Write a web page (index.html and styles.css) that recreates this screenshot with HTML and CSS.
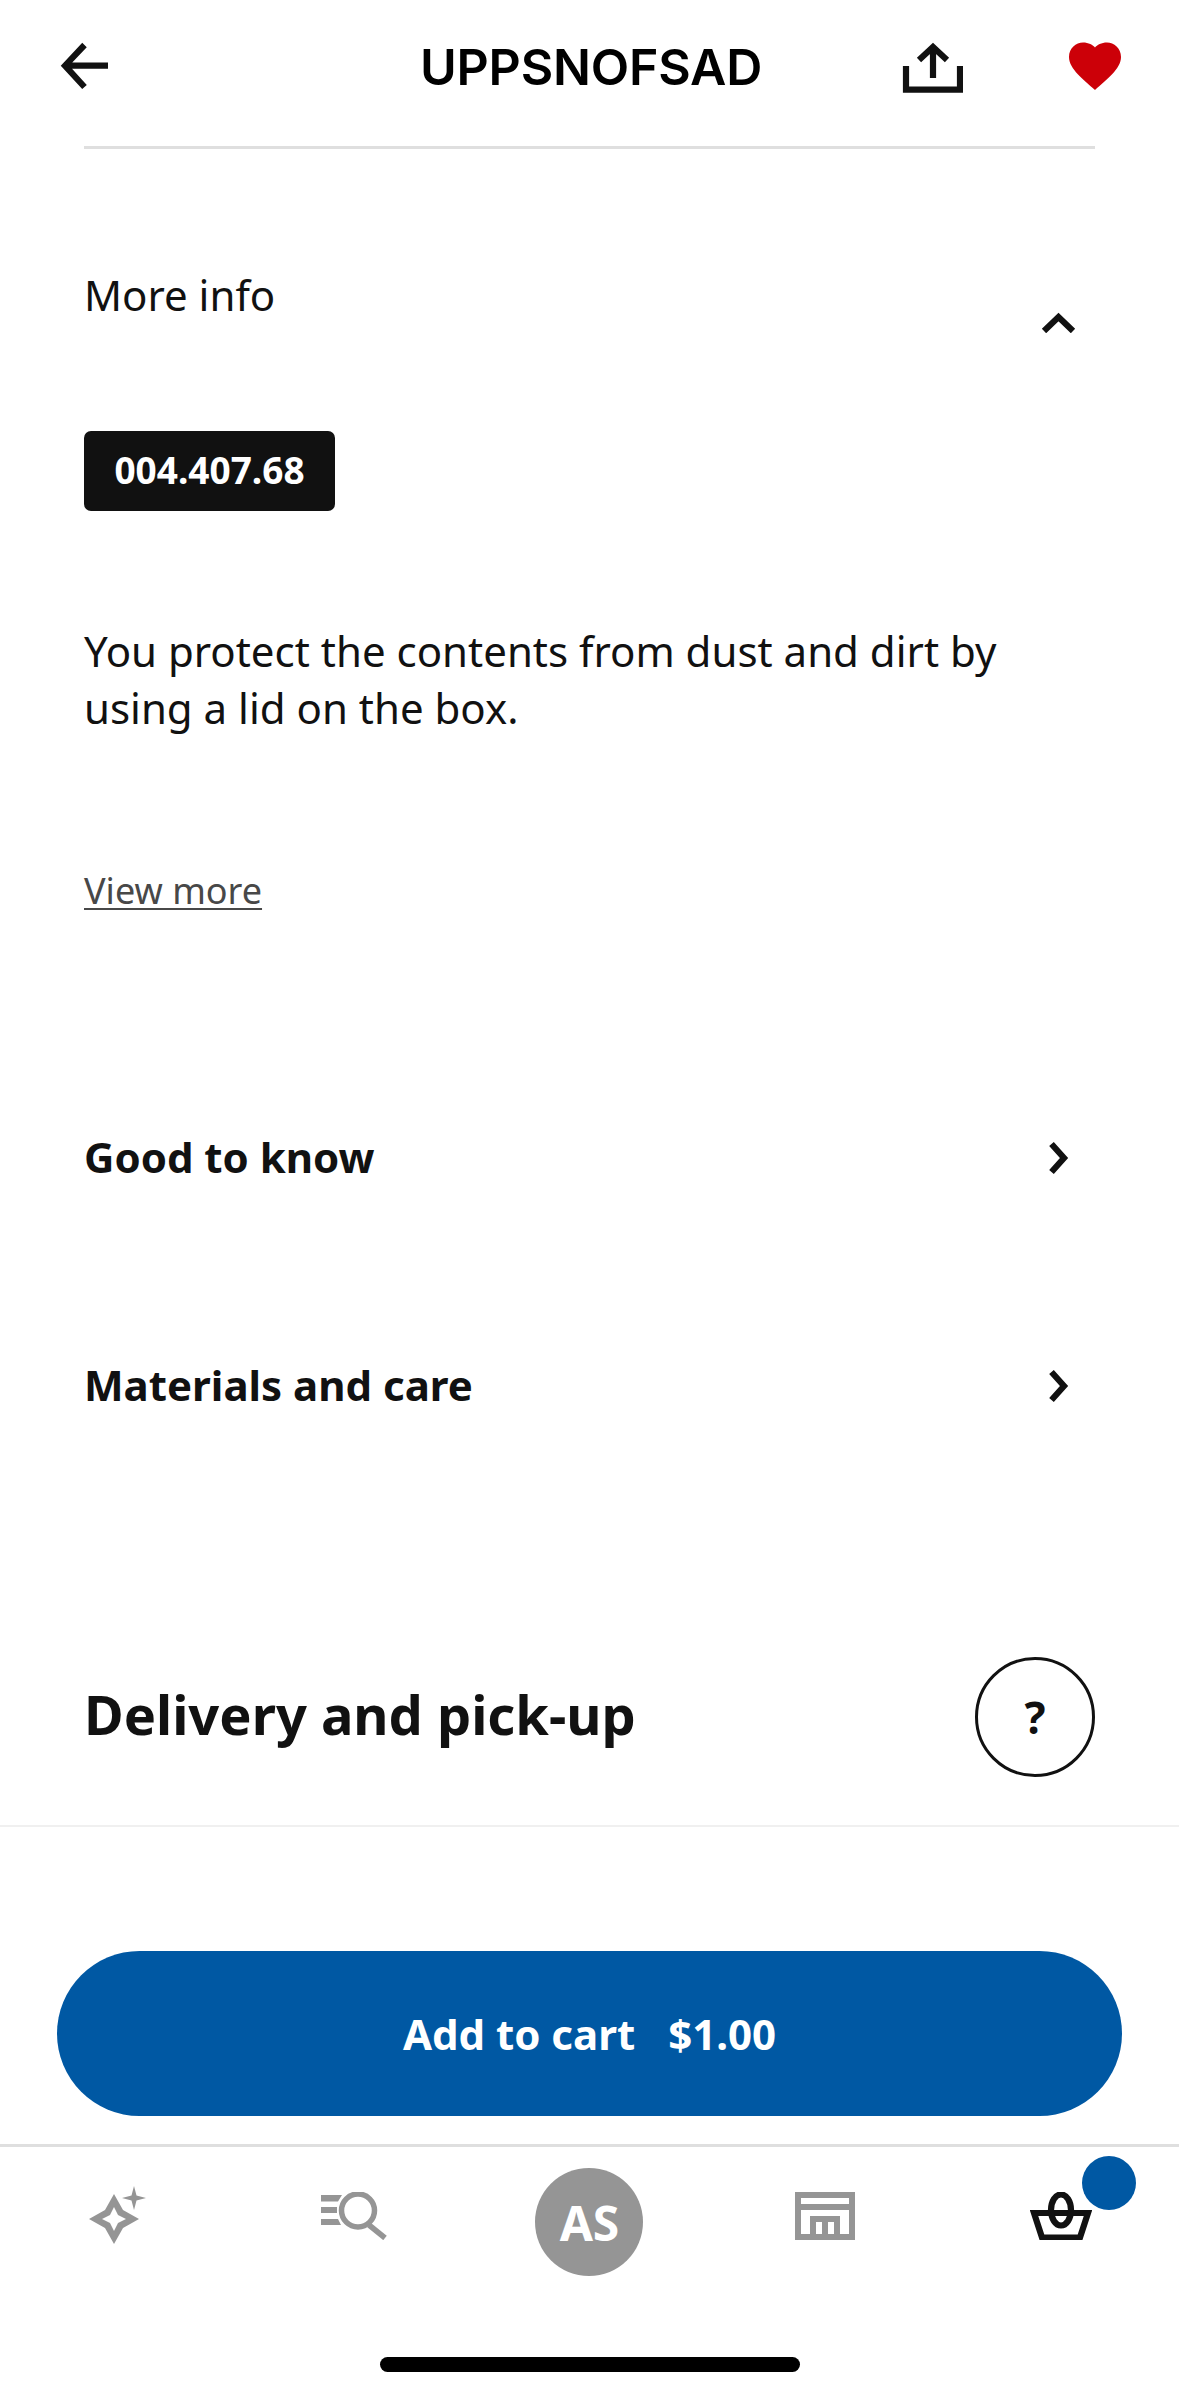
FILE: index.html
```html
<!DOCTYPE html>
<html lang="en">
<head>
<meta charset="utf-8">
<title>UPPSNOFSAD</title>
<link rel="stylesheet" href="styles.css">
</head>
<body>
<div class="page">
  <header class="topbar">
    <svg class="ico-back" viewBox="0 0 49 48"><path d="M24.500 3 L5 23.700 L24.500 45 M5 23.700 H48" class="line"/></svg>
    <h1 class="title">UPPSNOFSAD</h1>
    <div class="actions">
      <svg class="ico-share" viewBox="0 0 61 51"><path d="M4 24 V47.700 H58 V24 M31 36 V5 M17 18 L31 5 L45 18" class="line"/></svg>
      <svg class="ico-heart" viewBox="0 0 54 48"><path d="M27 48 C16 38 1 27 1 15 C1 6 8 0.500 15 0.500 C20.500 0.500 25 3 27 5.500 C29 3 33.500 0.500 39 0.500 C46 0.500 53 6 53 15 C53 27 38 38 27 48 Z" fill="#cc0008"/></svg>
    </div>
  </header>
  <div class="rule"></div>

  <section class="content">
    <div class="info-head">
      <span class="info-label">More info</span>
      <svg class="ico-up" viewBox="0 0 35 21"><path d="M3 19 L17.500 5 L32 19" class="line"/></svg>
    </div>
    <div class="article">004.407.68</div>
    <p class="desc">You protect the contents from dust and dirt by<br>using a lid on the box.</p>
    <a class="more">View more</a>

    <div class="rows">
      <div class="row">
        <span class="row-label">Good to know</span>
        <svg class="ico-right" viewBox="0 0 21 34"><path d="M3.500 3 L16 17 L3.500 31" class="line"/></svg>
      </div>
      <div class="row">
        <span class="row-label">Materials and care</span>
        <svg class="ico-right" viewBox="0 0 21 34"><path d="M3.500 3 L16 17 L3.500 31" class="line"/></svg>
      </div>
    </div>

    <div class="delivery">
      <h2 class="delivery-title">Delivery and pick-up</h2>
      <div class="help">?</div>
    </div>
  </section>
  <div class="hairline"></div>

  <div class="cta-wrap">
    <button class="cta"><span>Add to cart</span><span>$1.00</span></button>
  </div>

  <nav class="nav">
    <div class="nav-item">
      <svg class="ico-spark" viewBox="0 0 57 58"><path fill-rule="evenodd" class="gray" d="M25 8 L34 24 L50 33 L34 42 L25 58 L16 42 L0 33 L16 24 Z M25 21 L21 29 L13 33 L21 37 L25 45 L29 37 L37 33 L29 29 Z M45 0 L47.500 9.500 L57 12 L47.500 14.500 L45 24 L42.500 14.500 L33 12 L42.500 9.500 Z"/></svg>
    </div>
    <div class="nav-item">
      <svg class="ico-search" viewBox="0 0 66 48"><path class="gray" d="M0 3 H21 L17 9.500 H0 Z M0 15 H16 V21 H0 Z M0 27 H17 L20 33 H0 Z"/><circle cx="37" cy="18.500" r="16.500" class="gline"/><path d="M48 33 L64 46" class="gline"/></svg>
    </div>
    <div class="nav-item">
      <div class="avatar">AS</div>
    </div>
    <div class="nav-item">
      <svg class="ico-store" viewBox="0 0 60 48"><path fill-rule="evenodd" class="gray" d="M0 0 H60 V48 H0 Z M6 6 V12 H54 V6 Z M6 18 V42 H15 V24 H45 V42 H54 V18 Z M21 30 V42 H27 V30 Z M33 30 V42 H39 V30 Z"/></svg>
    </div>
    <div class="nav-item nav-cart">
      <svg class="ico-basket" viewBox="0 0 62 48"><path d="M4 21 H58 L50 45.500 H12 Z" class="line"/><ellipse cx="31" cy="18" rx="10" ry="15.500" class="line"/></svg>
      <span class="cart-dot"></span>
    </div>
  </nav>
  <div class="home-bar"></div>
</div>
</body>
</html>
```

FILE: styles.css
```css
* { box-sizing: border-box; }
html, body { margin: 0; padding: 0; background: #fff; }
.page {
  width: 1179px;
  height: 2396px;
  overflow: hidden;
  font-family: "Noto Sans", sans-serif;
  color: #111;
  background: #fff;
}
svg { display: block; flex: none; }
.line { fill: none; stroke: #111; stroke-width: 6.2; }
.gray { fill: #959595; }
.gline { fill: none; stroke: #959595; stroke-width: 5.5; }

.topbar {
  height: 146px;
  padding: 42px 57px 0 60px;
  display: grid;
  grid-template-columns: 1fr auto 1fr;
  align-items: start;
}
.title {
  margin: 0;
  font-family: Inter, "Liberation Sans", sans-serif;
  font-size: 50px;
  line-height: 50px;
  font-weight: 600;
  letter-spacing: -0.2px;
  color: #000;
}
.ico-back { width: 49px; height: 48px; }
.actions { display: flex; justify-content: flex-end; gap: 105px; }
.ico-share { width: 61px; height: 51px; }
.ico-heart { width: 54px; height: 48px; }
.rule { height: 3px; margin: 0 84px; background: #dfdfdf; }

.content { padding: 0 84px; }
.info-head {
  margin-top: 117px;
  height: 67px;
  display: flex;
  justify-content: space-between;
  align-items: flex-start;
}
.info-label { font-size: 42px; line-height: 57px; color: #111; }
.ico-up { width: 35px; height: 21px; margin: 46px 19px 0 0; }

.article {
  margin-top: 98px;
  width: 251px;
  height: 80px;
  padding-bottom: 3px;
  background: #111;
  color: #fff;
  border-radius: 7px;
  font-size: 37px;
  font-weight: 700;
  display: flex;
  align-items: center;
  justify-content: center;
}
.desc {
  margin: 111px 0 0;
  font-size: 42px;
  line-height: 57px;
  color: #111;
}
.more {
  display: block;
  margin-top: 131px;
  font-size: 36px;
  line-height: 48px;
  color: #484848;
  text-decoration: underline;
  text-decoration-thickness: 2px;
  text-underline-offset: 4px;
}

.rows { margin-top: 129px; }
.row {
  height: 228px;
  display: flex;
  justify-content: space-between;
  align-items: center;
}
.row-label { font-size: 42px; font-weight: 700; color: #111; padding-bottom: 4px; }
.ico-right { width: 21px; height: 34px; margin-right: 26px; }

.delivery {
  margin-top: 157px;
  height: 120px;
  display: flex;
  justify-content: space-between;
  align-items: center;
}
.delivery-title { margin: 0; font-size: 54.200px; font-weight: 700; color: #111; padding-bottom: 6px; }
.help {
  width: 120px;
  height: 120px;
  border: 3px solid #111;
  border-radius: 50%;
  display: flex;
  align-items: center;
  justify-content: center;
  font-size: 44px;
  font-weight: 700;
}
.hairline { height: 2px; margin-top: 48px; background: #f0f0f0; }

.cta-wrap { padding: 124px 57px 28px; }
.cta {
  width: 100%;
  height: 165px;
  padding-bottom: 2px;
  border: 0;
  border-radius: 83px;
  background: #0058a3;
  color: #fff;
  font-family: inherit;
  font-size: 42px;
  font-weight: 700;
  display: flex;
  align-items: center;
  justify-content: center;
  gap: 33px;
}

.nav {
  height: 213px;
  border-top: 3px solid #dfdfdf;
  display: grid;
  grid-template-columns: repeat(5, 1fr);
  justify-items: center;
  align-items: start;
  padding-top: 21px;
}
.nav-item { position: relative; }
.ico-spark { width: 57px; height: 58px; margin-top: 18px; }
.ico-search { width: 66px; height: 48px; margin-top: 24px; }
.ico-store { width: 60px; height: 48px; margin-top: 24px; }
.ico-basket { width: 62px; height: 48px; margin-top: 24px; }
.avatar {
  width: 108px;
  height: 108px;
  border-radius: 50%;
  background: #959595;
  color: #fff;
  font-size: 48px;
  font-weight: 700;
  display: flex;
  align-items: center;
  justify-content: center;
}
.cart-dot {
  position: absolute;
  top: -12px;
  left: 52px;
  width: 54px;
  height: 54px;
  border-radius: 50%;
  background: #0058a3;
}
.home-bar {
  width: 420px;
  height: 15px;
  margin: 0 auto;
  border-radius: 8px;
  background: #000;
}
```
